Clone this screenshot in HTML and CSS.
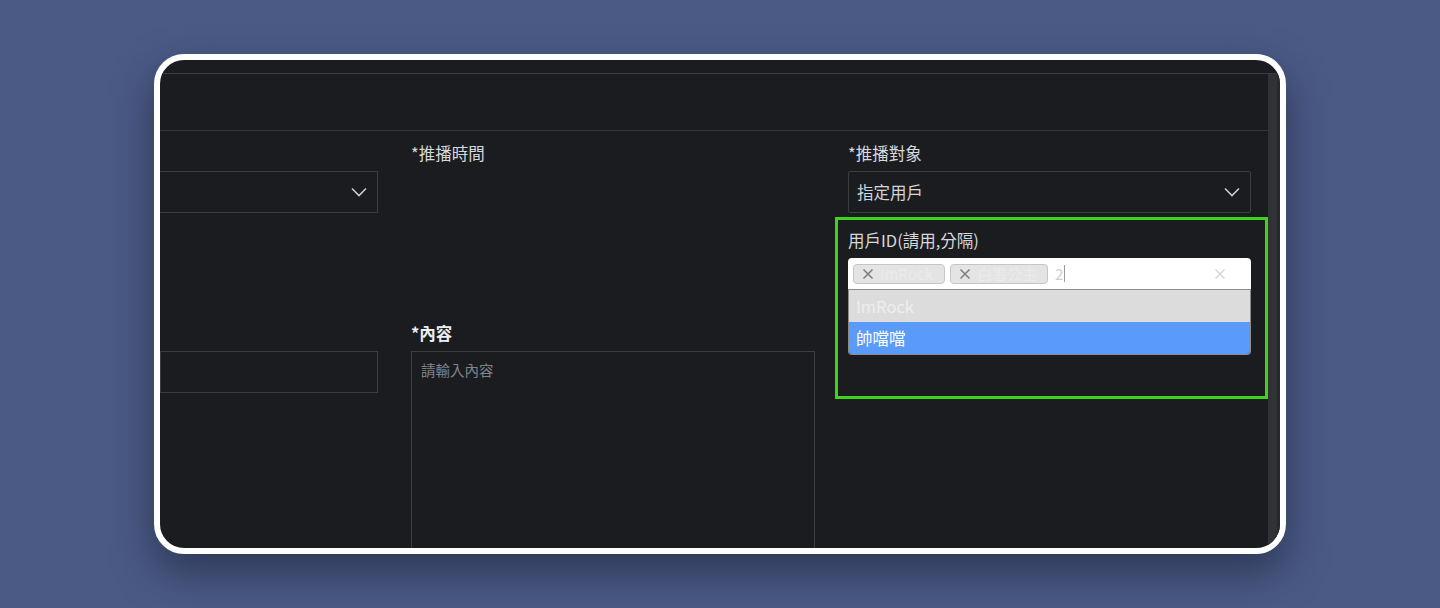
FILE: index.html
```html
<!DOCTYPE html>
<html lang="zh-Hant">
<head>
<meta charset="utf-8">
<title>推播設定</title>
<link rel="stylesheet" href="styles.css">
</head>
<body>
<div class="stage">
  <div class="card">
    <div class="top-strip"></div>
    <div class="frame">
      <div class="main">
        <div class="modal-header"></div>
        <div class="form">
          <div class="field">
            <div class="label"></div>
            <div class="select select-cut">
              <span class="select-text"></span>
              <svg class="chev" viewBox="0 0 16 10" width="16" height="10"><path d="M1 1.5 L8 8.5 L15 1.5" fill="none" stroke="#c9ccd1" stroke-width="1.6"/></svg>
            </div>
          </div>
          <div class="field">
            <div class="label">*推播時間</div>
          </div>
          <div class="field">
            <div class="label">*推播對象</div>
            <div class="select">
              <span class="select-text">指定用戶</span>
              <svg class="chev" viewBox="0 0 16 10" width="16" height="10"><path d="M1 1.5 L8 8.5 L15 1.5" fill="none" stroke="#c9ccd1" stroke-width="1.6"/></svg>
            </div>
            <div class="uid-field">
              <div class="highlight"></div>
              <div class="label">用戶ID(請用,分隔)</div>
              <div class="tag-input">
                <span class="tag"><svg class="tag-x" viewBox="0 0 12 12" width="12" height="12"><path d="M1.5 1.5 L10.5 10.5 M10.5 1.5 L1.5 10.5" stroke="#7d7d7d" stroke-width="1.5" fill="none"/></svg><span class="tag-text">ImRock</span></span>
                <span class="tag tag-2"><svg class="tag-x" viewBox="0 0 12 12" width="12" height="12"><path d="M1.5 1.5 L10.5 10.5 M10.5 1.5 L1.5 10.5" stroke="#7d7d7d" stroke-width="1.5" fill="none"/></svg><span class="tag-text">白雪公主</span></span>
                <span class="typed">2</span><span class="caret"></span>
                <svg class="clear" viewBox="0 0 12 12" width="12" height="12"><path d="M1.5 1.5 L10.5 10.5 M10.5 1.5 L1.5 10.5" stroke="#d4d4d4" stroke-width="1.4" fill="none"/></svg>
                <div class="dropdown">
                  <div class="opt opt-muted">ImRock</div>
                  <div class="opt opt-active">帥噹噹</div>
                </div>
              </div>
            </div>
          </div>
          <div class="field">
            <div class="label"></div>
            <div class="input input-cut"></div>
          </div>
          <div class="field">
            <div class="label label-bold">*內容</div>
            <div class="textarea">請輸入內容</div>
          </div>
          <div class="field"></div>
        </div>
      </div>
      <div class="scrollbar"><div class="thumb"></div></div>
    </div>
  </div>
</div>
</body>
</html>
```

FILE: styles.css
```css
* { box-sizing: border-box; }
html, body { margin: 0; padding: 0; }
body {
  width: 1440px;
  height: 608px;
  overflow: hidden;
  background: #4a5a85;
  font-family: "Noto Sans CJK TC", "Noto Sans", sans-serif;
}
.stage {
  padding: 54px 0 0 154px;
}
.card {
  width: 1132px;
  height: 500px;
  border: 6px solid #ffffff;
  border-radius: 30px;
  background: #1b1c1f;
  overflow: hidden;
  display: flex;
  flex-direction: column;
  box-shadow: 0 18px 40px rgba(22, 28, 50, 0.55);
}
.top-strip {
  height: 14px;
  flex: none;
  border-bottom: 1px solid #3a3c3f;
}
.frame {
  flex: 1;
  display: flex;
  min-height: 0;
}
.main {
  flex: 1;
  min-width: 0;
  overflow: hidden;
}
.scrollbar {
  width: 12px;
  flex: none;
  background: #26282b;
  padding-right: 3px;
}
.thumb {
  height: 100%;
  background: #303235;
}
.modal-header {
  height: 57px;
  border-bottom: 1px solid #333538;
}
.form {
  display: grid;
  grid-template-columns: 218px 404px 403px;
  column-gap: 33px;
  row-gap: 32px;
  padding-top: 11px;
}
.field {
  display: flex;
  flex-direction: column;
}
.label {
  height: 22px;
  line-height: 22px;
  margin-bottom: 7px;
  font-size: 16.5px;
  color: #d5d8dd;
  white-space: nowrap;
}
.label-bold {
  font-weight: 700;
  color: #eceef1;
}
.select {
  height: 42px;
  border: 1px solid #3b3d41;
  border-radius: 2px;
  display: flex;
  align-items: center;
  justify-content: space-between;
  padding: 0 10px 0 8px;
}
.select-cut, .input-cut {
  border-left: none;
  border-radius: 0;
}
.select-text {
  font-size: 16.5px;
  color: #d3d5d9;
}
.chev { display: block; }
.input {
  height: 42px;
  border: 1px solid #3b3d41;
}
.textarea {
  height: 230px;
  border: 1px solid #3b3d41;
  padding: 8px 9px;
  font-size: 14.5px;
  color: #7f8388;
  line-height: 20px;
}
.uid-field {
  position: relative;
  margin-top: 16px;
}
.highlight {
  position: absolute;
  left: -13px;
  top: -12px;
  width: 433px;
  height: 182px;
  border: 3px solid #41d31c;
  pointer-events: none;
}
.tag-input {
  position: relative;
  height: 32px;
  background: #ffffff;
  border-radius: 4px 4px 0 0;
  border-bottom: 1px solid #8c8c8c;
  display: flex;
  align-items: center;
  padding: 0 5px;
}
.tag {
  height: 20px;
  width: 92px;
  margin-right: 5px;
  background: #e4e4e4;
  border: 1px solid #c6c6c6;
  border-radius: 4px;
  display: flex;
  align-items: center;
  padding-left: 8px;
  overflow: hidden;
  white-space: nowrap;
}
.tag-2 { width: 98px; }
.tag-x {
  display: block;
  flex: none;
  margin-right: 6px;
}
.tag-text {
  font-size: 15px;
  color: #ebebeb;
}
.typed {
  font-size: 15px;
  color: #d0d0d0;
  margin-left: 2px;
}
.caret {
  width: 1px;
  height: 17px;
  background: #9a9a9a;
  margin-left: 1px;
}
.clear {
  display: block;
  margin-left: auto;
  margin-right: 20px;
}
.dropdown {
  position: absolute;
  left: 0;
  right: 0;
  top: 32px;
  border: 1px solid #8c8c8c;
  border-top: none;
  border-radius: 0 0 4px 4px;
  overflow: hidden;
}
.opt {
  height: 32px;
  line-height: 32px;
  padding-left: 7px;
  font-size: 16.5px;
}
.opt-muted {
  background: #dcdcdc;
  color: #eeeeee;
}
.opt-active {
  background: #5a9af8;
  color: #ffffff;
}
```
